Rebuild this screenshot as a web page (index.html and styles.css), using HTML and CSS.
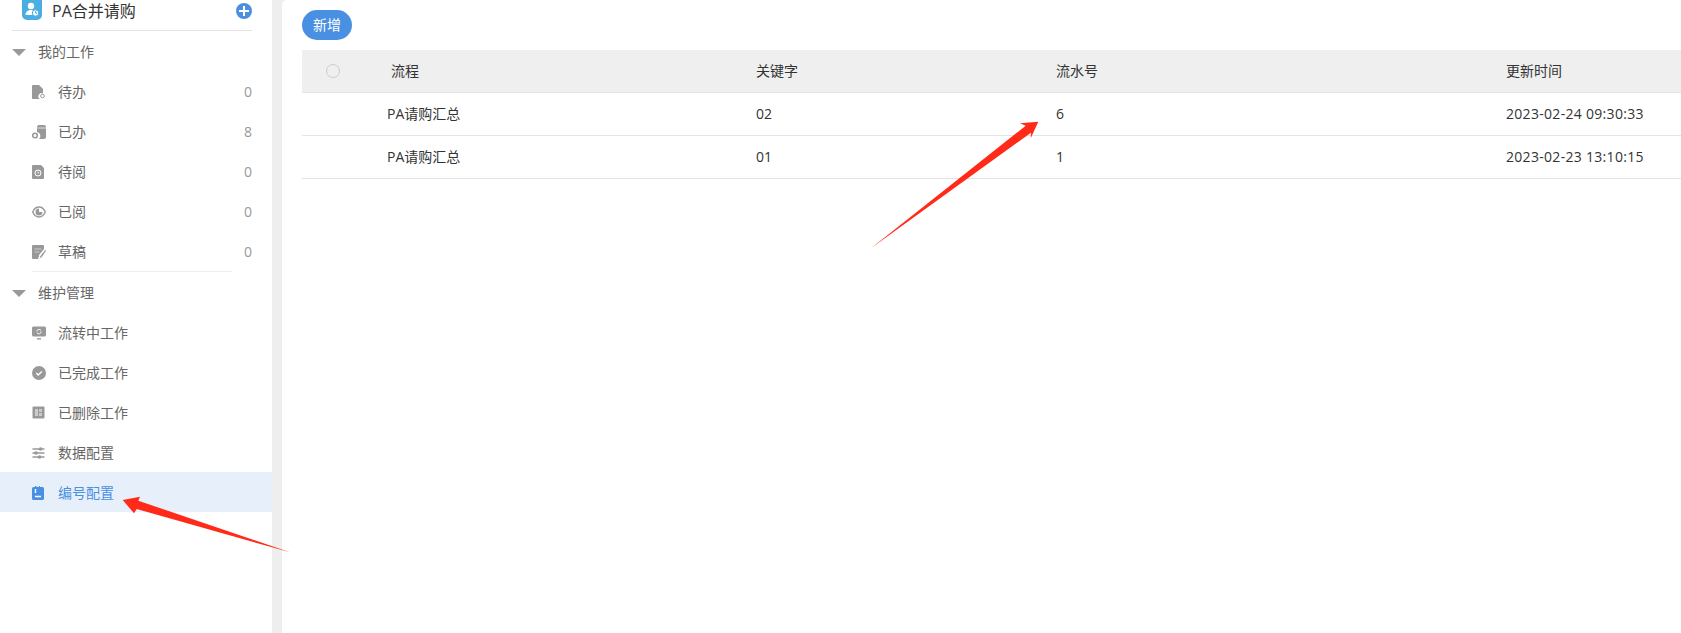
FILE: index.html
```html
<!DOCTYPE html>
<html lang="zh-CN">
<head>
<meta charset="utf-8">
<title>PA合并请购</title>
<link rel="stylesheet" href="styles.css">
</head>
<body>
<div class="app">
  <aside class="sidebar">
    <div class="brand">
      <svg class="brand-logo" viewBox="0 0 20 20"><path d="M0 0h20v15a5 5 0 0 1-5 5H5a5 5 0 0 1-5-5z" fill="#4aaee2"/><circle cx="9" cy="6" r="3.200" fill="#fff"/><path d="M3.500 15c0-3.500 2.500-5 5.500-5 1 0 1.500.2 2 .4V15z" fill="#fff"/><circle cx="13.500" cy="13" r="3.200" fill="#fff" stroke="#4aaee2"/><path d="M13.500 11.300v1.800H15" fill="none" stroke="#4aaee2"/></svg>
      <span class="brand-name">PA合并请购</span>
      <svg class="brand-add" viewBox="0 0 16 16"><circle cx="8" cy="8" r="8" fill="#4a90e2"/><path d="M8 3v10M3 8h10" stroke="#fff" stroke-width="2"/></svg>
    </div>

    <div class="group-title"><span class="caret"></span>我的工作</div>
    <ul class="menu menu-lined">
      <li class="item"><svg class="ico" viewBox="0 0 14 14"><path d="M1 0h6l4 4v4.500a3 3 0 0 0-3 5.500H1a1 1 0 0 1-1-1V1a1 1 0 0 1 1-1z" fill="#999"/><circle cx="10.500" cy="11" r="1.800" fill="none" stroke="#999"/></svg><span class="label">待办</span><span class="count">0</span></li>
      <li class="item"><svg class="ico" viewBox="0 0 14 14"><path d="M6 0h6a2 2 0 0 1 2 2v10a2 2 0 0 1-2 2H7a4 4 0 0 0-2-7V2z" fill="#999"/><path d="M5.500 3h8.500" stroke="#fff" stroke-width=".7"/><circle cx="3" cy="10.500" r="2.300" fill="#fff" stroke="#999" stroke-width="1.600"/></svg><span class="label">已办</span><span class="count">8</span></li>
      <li class="item"><svg class="ico" viewBox="0 0 14 14"><path d="M1 0h8l3 3v10a1 1 0 0 1-1 1H1a1 1 0 0 1-1-1V1a1 1 0 0 1 1-1z" fill="#999"/><circle cx="6" cy="8" r="3" fill="none" stroke="#fff"/><path d="M6 6.500V8h1.200" fill="none" stroke="#fff" stroke-width=".8"/></svg><span class="label">待阅</span><span class="count">0</span></li>
      <li class="item"><svg class="ico" viewBox="0 0 14 12"><path d="M.7 6C2 3 4.300 1 7 1s5 2 6.300 5C12 9 9.700 11 7 11S2 9 .7 6z" fill="none" stroke="#999" stroke-width="1.400"/><path d="M7 2.500A3.500 3.500 0 1 0 10.500 6H7z" fill="#999"/></svg><span class="label">已阅</span><span class="count">0</span></li>
      <li class="item"><svg class="ico" viewBox="0 0 14 14"><path d="M1 0h10a1 1 0 0 1 1 1v3L7 10v2h-.5L6 14H1a1 1 0 0 1-1-1V1a1 1 0 0 1 1-1z" fill="#999"/><path d="M2.500 4h7M2.500 7h5" stroke="#ccc"/><path d="M13.500 4.500L8.500 11 7.500 13.500 9.800 12l4-6z" fill="#999"/></svg><span class="label">草稿</span><span class="count">0</span></li>
    </ul>

    <div class="group-title"><span class="caret"></span>维护管理</div>
    <ul class="menu">
      <li class="item"><svg class="ico" viewBox="0 0 14 13"><rect width="14" height="10" rx="1.500" fill="#999"/><path d="M5 12.300h4" stroke="#999" stroke-width="1.400"/><path d="M4.800 5a2.300 2.300 0 0 1 4.200-1M9.200 5A2.300 2.300 0 0 1 5 6.300" fill="none" stroke="#fff"/></svg><span class="label">流转中工作</span></li>
      <li class="item"><svg class="ico" viewBox="0 0 14 14"><circle cx="7" cy="7" r="7" fill="#999"/><path d="M4.200 7l2 2 3.600-3.500" fill="none" stroke="#fff" stroke-width="1.300"/></svg><span class="label">已完成工作</span></li>
      <li class="item"><svg class="ico" viewBox="0 0 14 14"><rect x=".5" y=".5" width="12" height="12" rx="1" fill="#999"/><path d="M3 3h3v7H3zM7 3h3v3H7zM7 7h3v3H7z" fill="#ccc"/></svg><span class="label">已删除工作</span></li>
      <li class="item"><svg class="ico" viewBox="0 0 14 12"><path d="M.5 2h12M.5 6h12M.5 10h12" stroke="#999" stroke-width="1.400"/><circle cx="8.500" cy="2" r="1.800" fill="#999"/><circle cx="4" cy="6" r="1.800" fill="#999"/><circle cx="7.500" cy="10" r="1.800" fill="#999"/></svg><span class="label">数据配置</span></li>
      <li class="item item-active"><svg class="ico" viewBox="0 0 14 14"><path d="M1.500 1H3V0h1.500v1H7V0h1v1h2.500A1.500 1.500 0 0 1 12 2.500v10a1.500 1.500 0 0 1-1.500 1.500h-9A1.500 1.500 0 0 1 0 12.500v-10A1.500 1.500 0 0 1 1.500 1z" fill="#4a90e2"/><path d="M3.500 3v4M3 10.500h6" stroke="#fff" stroke-width="1.400"/></svg><span class="label">编号配置</span></li>
    </ul>
  </aside>

  <main class="content">
    <button class="add-btn" type="button">新增</button>
    <table class="grid">
      <colgroup><col class="c-check"><col class="c-flow"><col class="c-key"><col class="c-serial"><col class="c-time"></colgroup>
      <thead>
        <tr><th><span class="radio"></span></th><th class="th-flow">流程</th><th>关键字</th><th>流水号</th><th>更新时间</th></tr>
      </thead>
      <tbody>
        <tr><td></td><td>PA请购汇总</td><td>02</td><td>6</td><td class="time">2023-02-24 09:30:33</td></tr>
        <tr><td></td><td>PA请购汇总</td><td>01</td><td>1</td><td class="time">2023-02-23 13:10:15</td></tr>
      </tbody>
    </table>
  </main>
</div>

<svg class="annotations" viewBox="0 0 1681 633">
  <polygon points="122.700,500 140,496.700 138.300,500.700 290,552.300 136.700,509 134,513.300" fill="#ff2a17"/>
  <polygon points="871,248.300 1025.700,125.700 1020,123.300 1038.300,121.700 1030.700,138.300 1031,132.700" fill="#ff2a17"/>
</svg>
</body>
</html>
```
FILE: styles.css
```css
* { box-sizing: border-box; }

html, body {
  margin: 0;
  height: 100%;
  overflow: hidden;
}

body {
  position: relative;
  background: #eee;
  color: #333;
  font-family: "Open Sans", "Noto Sans CJK SC", sans-serif;
  font-size: 14px;
  line-height: 20px;
}

.app {
  display: flex;
  height: 100%;
  gap: 10px;
}

/* Sidebar */
.sidebar {
  flex: 0 0 272px;
  background: #fff;
}

.brand {
  display: flex;
  align-items: flex-start;
  height: 31px;
  margin: 0 20px 0 12px;
  padding: 0 0 0 10px;
  border-bottom: 1px solid #e4e4e4;
}

.brand-logo {
  width: 20px;
  height: 20px;
  flex: none;
}

.brand-name {
  margin-left: 10px;
  font-size: 16px;
  line-height: 22px;
  color: #333;
}

.brand-add {
  width: 16px;
  height: 16px;
  margin: 3px 0 0 auto;
}

.group-title {
  display: flex;
  align-items: center;
  height: 40px;
  padding: 2px 0 0 12px;
  color: #666;
}

.caret {
  width: 0;
  height: 0;
  margin-right: 12px;
  border-style: solid;
  border-width: 7px 7px 0;
  border-color: #999 transparent transparent;
}

.menu {
  margin: 0;
  padding: 0;
  list-style: none;
}

.menu-lined {
  padding-bottom: 1px;
  background: linear-gradient(#eee, #eee) 32px 100% / 200px 1px no-repeat;
}

.item {
  display: flex;
  align-items: center;
  height: 40px;
  padding: 2px 20px 0 32px;
  color: #666;
}

.ico {
  width: 14px;
  height: 14px;
  flex: none;
  margin-right: 12px;
}

.label {
  flex: 1;
}

.count {
  color: #999;
}

.item-active {
  background: #e7f0fa;
  color: #4a90e2;
}

/* Main */
.content {
  flex: 1;
  min-width: 0;
  padding: 10px 0 0 20px;
  background: #fff;
  border-top-left-radius: 5px;
}

.add-btn {
  display: block;
  width: 50px;
  height: 30px;
  margin: 0 0 10px;
  padding: 0 0 1px;
  border: 0;
  border-radius: 15px;
  background: #4a90e2;
  color: #fff;
  font: inherit;
}

.grid {
  width: 100%;
  table-layout: fixed;
  border-collapse: collapse;
}

.c-check { width: 85px; }
.c-flow { width: 369px; }
.c-key { width: 300px; }
.c-serial { width: 450px; }

.grid th {
  height: 42px;
  padding: 0;
  background: #efefef;
  border-bottom: 1px solid #e4e4e4;
  font-weight: 400;
  text-align: left;
}

.grid td {
  height: 43px;
  padding: 0;
  border-bottom: 1px solid #e4e4e4;
}

.grid .th-flow { padding-left: 4px; }

.grid .time { letter-spacing: .3px; }

.radio {
  display: block;
  width: 14px;
  height: 14px;
  margin-left: 24px;
  border: 1px solid #ccc;
  border-radius: 50%;
}

/* Red annotation arrows drawn over the screenshot */
.annotations {
  position: absolute;
  left: 0;
  top: 0;
  width: 1681px;
  height: 633px;
  pointer-events: none;
}
```
